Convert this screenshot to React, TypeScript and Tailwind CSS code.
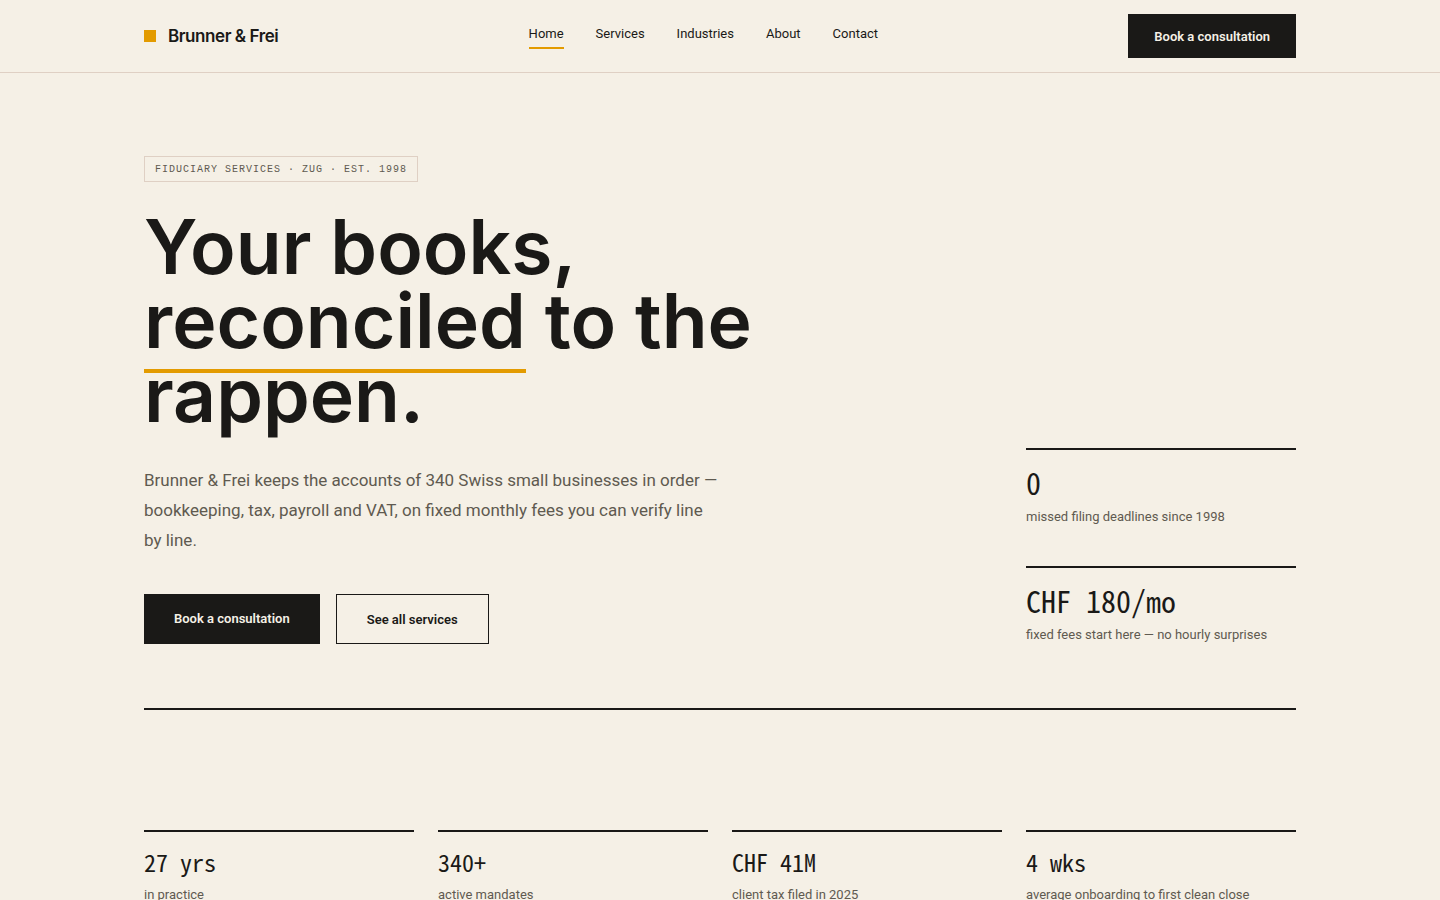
import React from 'react';

interface NavItem {
  label: string;
  href: string;
  active?: boolean;
}

interface Stat {
  value: string;
  label: string;
}

const navItems: NavItem[] = [
  { label: 'Home', href: '#home', active: true },
  { label: 'Services', href: '#services' },
  { label: 'Industries', href: '#industries' },
  { label: 'About', href: '#about' },
  { label: 'Contact', href: '#contact' },
];

const heroStats: Stat[] = [
  { value: '0', label: 'missed filing deadlines since 1998' },
  { value: 'CHF 180/mo', label: 'fixed fees start here — no hourly surprises' },
];

const firmStats: Stat[] = [
  { value: '27 yrs', label: 'in practice' },
  { value: '340+', label: 'active mandates' },
  { value: 'CHF 41M', label: 'client tax filed in 2025' },
  { value: '4 wks', label: 'average onboarding to first clean close' },
];

const Header: React.FC = () => (
  <header className="border-b border-[#dfd0c4]">
    <div className="max-w-6xl mx-auto h-[72px] flex items-center justify-between">
      <a href="#home" className="flex items-center gap-3 font-['Inter',sans-serif] text-[17px] leading-6 font-semibold tracking-tight">
        <span className="size-3 bg-[#e39b00]" />
        Brunner &amp; Frei
      </a>
      <nav className="flex gap-8 text-[13px] leading-[21px]">
        {navItems.map((item) => (
          <a
            key={item.label}
            href={item.href}
            className={`border-b-2 pb-[3px] ${item.active ? 'border-[#e39b00]' : 'border-transparent'}`}
          >
            {item.label}
          </a>
        ))}
      </nav>
      <a href="#contact" className="bg-[#1a1917] px-[26px] pt-[13px] pb-[11px] text-[13px] leading-5 font-semibold text-[#f5f0e6]">
        Book a consultation
      </a>
    </div>
  </header>
);

const Hero: React.FC = () => (
  <section className="max-w-6xl mx-auto border-b-2 border-[#1a1917] pt-[83px] pb-16 grid grid-cols-12 gap-x-6 items-end">
    <div className="col-span-9">
      <p className="w-fit border border-[#dfd0c4] px-2.5 pt-[5px] pb-[3px] font-['Liberation_Mono',monospace] text-[10px] leading-4 tracking-widest uppercase text-[#5f5a50]">
        Fiduciary services · Zug · Est. 1998
      </p>
      <h1 className="mt-7 max-w-[660px] font-['Inter',sans-serif] text-[75px] leading-[74px] font-semibold">
        Your books, <span className="border-b-4 border-[#e39b00] pb-[3px]">reconciled</span> to the rappen.
      </h1>
      <p className="mt-[33px] max-w-[580px] text-[17px] leading-[30px] text-[#5f5a50]">
        Brunner &amp; Frei keeps the accounts of 340 Swiss small businesses in order — bookkeeping, tax,
        payroll and VAT, on fixed monthly fees you can verify line by line.
      </p>
      <div className="mt-[39px] flex gap-4 text-[13px] leading-5 font-semibold">
        <a href="#contact" className="bg-[#1a1917] px-[30px] pt-[15px] pb-[13px] text-[#f5f0e6]">
          Book a consultation
        </a>
        <a href="#services" className="border border-[#1a1917] px-[30px] pt-[15px] pb-[13px]">
          See all services
        </a>
      </div>
    </div>
    <dl className="col-span-3 flex flex-col gap-10">
      {heroStats.map((stat) => (
        <div key={stat.value} className="flex flex-col-reverse border-t-2 border-[#1a1917] pt-4">
          <dt className="mt-2.5 text-[13px] leading-[18px] text-[#5f5a50]">{stat.label}</dt>
          <dd className="font-['Noto_Sans_Mono_CJK_SC','Liberation_Mono',monospace] text-[30px] leading-8 slashed-zero">{stat.value}</dd>
        </div>
      ))}
    </dl>
  </section>
);

const FirmStats: React.FC = () => (
  <section className="max-w-6xl mx-auto pt-30">
    <dl className="grid grid-cols-4 gap-6">
      {firmStats.map((stat) => (
        <div key={stat.value} className="flex flex-col-reverse justify-end border-t-2 border-[#1a1917] pt-4">
          <dt className="mt-2.5 text-[13px] leading-[18px] text-[#5f5a50]">{stat.label}</dt>
          <dd className="font-['Noto_Sans_Mono_CJK_SC','Liberation_Mono',monospace] text-[24px] leading-7 slashed-zero">{stat.value}</dd>
        </div>
      ))}
    </dl>
  </section>
);

const App: React.FC = () => {
  return (
    <div className="min-h-screen bg-[#f5f0e6] font-['Roboto',sans-serif] text-[#1a1917]">
      <Header />
      <main>
        <Hero />
        <FirmStats />
      </main>
    </div>
  );
};

export default App;
